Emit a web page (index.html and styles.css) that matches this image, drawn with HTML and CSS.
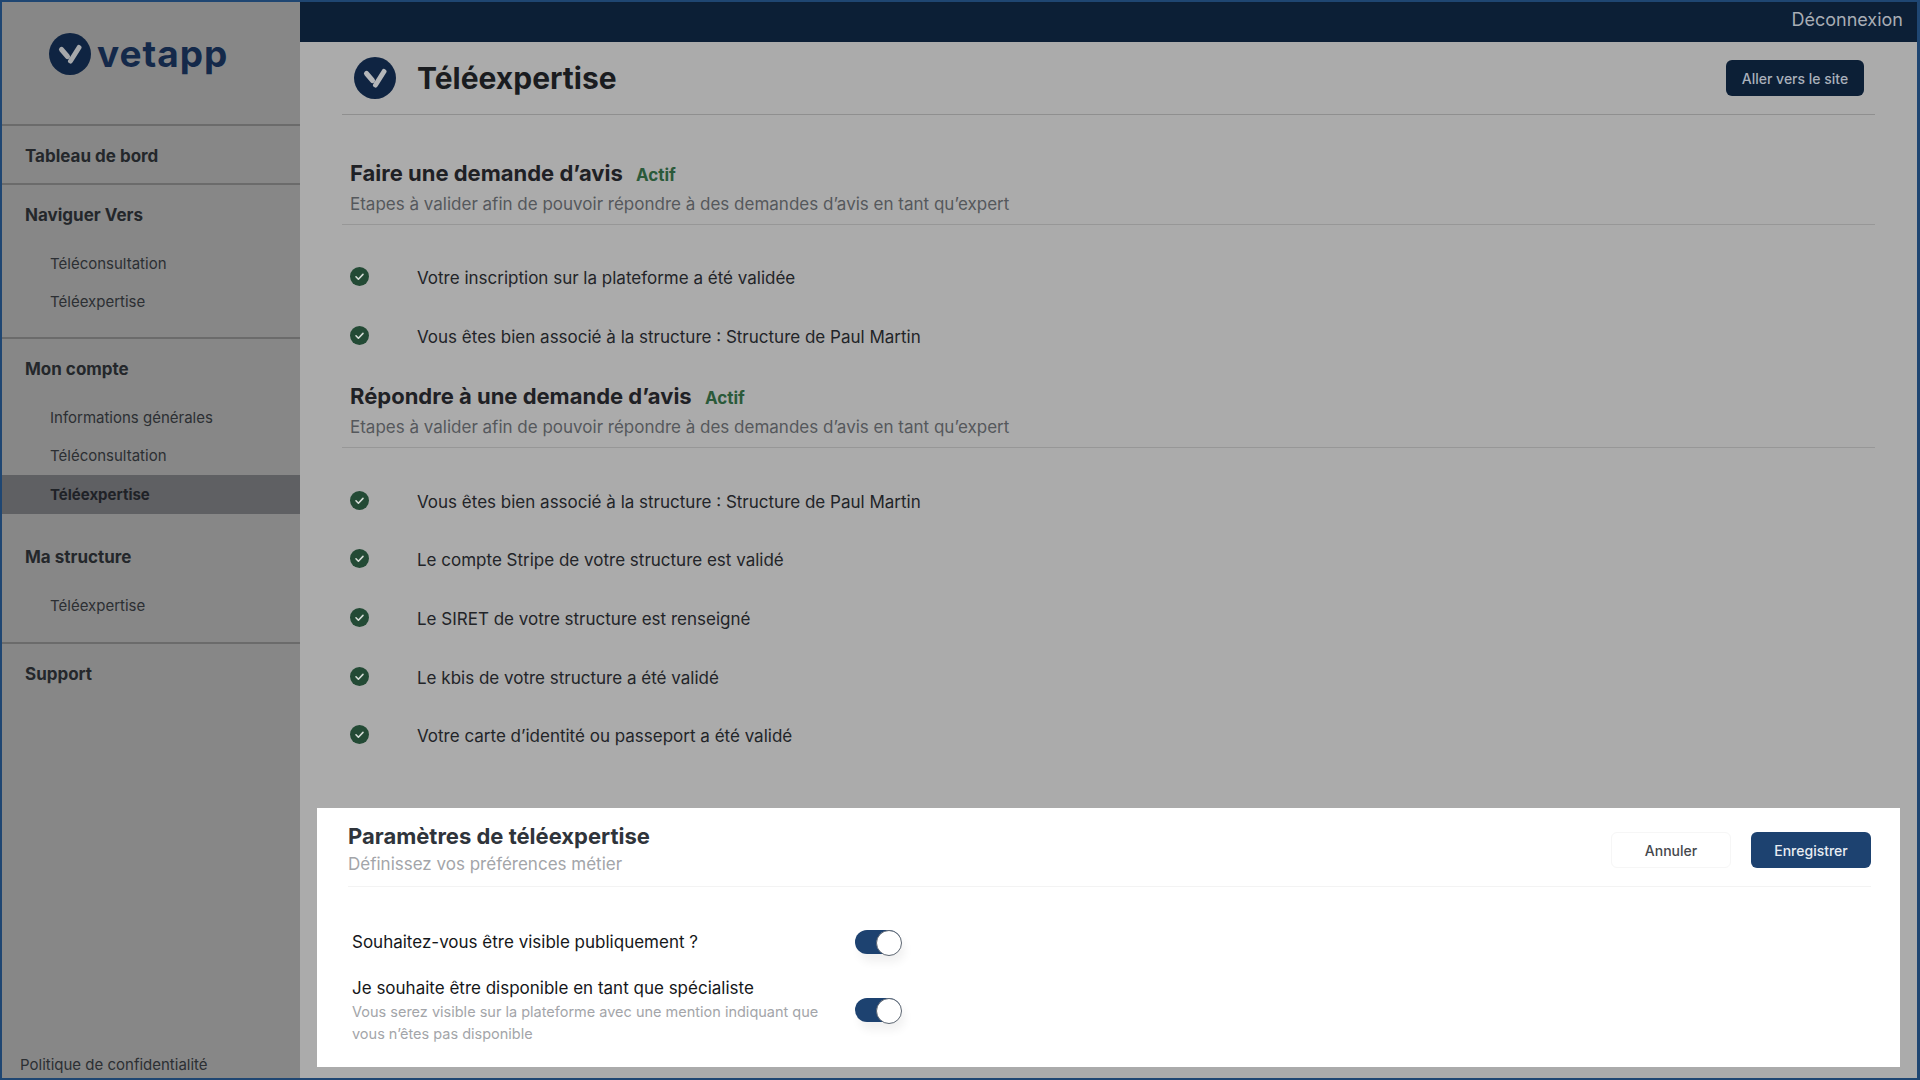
FILE: index.html
```html
<!DOCTYPE html>
<html lang="fr">
<head>
  <meta charset="UTF-8">
  <title>Téléexpertise</title>
  <link rel="stylesheet" href="styles.css">
</head>
<body>
  <svg class="defs" width="0" height="0">
    <symbol id="mark" viewBox="0 0 42 42">
      <circle cx="21" cy="21" r="21" fill="#0f2442"/>
      <path d="M12.5 16.5l6 7M30 14.5l-8.5 13.5" fill="none" stroke="currentColor" stroke-width="5" stroke-linecap="round"/>
    </symbol>
    <symbol id="check" viewBox="0 0 19 19">
      <circle cx="9.5" cy="9.5" r="9.5" fill="#234a35"/>
      <path d="M6 9.8l2.4 2.4 4.6-4.8" fill="none" stroke="#d5dcd7" stroke-width="1.6" stroke-linecap="round" stroke-linejoin="round"/>
    </symbol>
  </svg>

  <div class="app">
    <aside class="sidebar">
      <div class="logo">
        <svg class="logo-mark"><use href="#mark"/></svg>
        <span class="logo-text">vetapp</span>
      </div>
      <nav class="nav">
        <div class="nav-group nav-group-single">
          <div class="nav-title">Tableau de bord</div>
        </div>
        <div class="nav-group nav-group-browse">
          <div class="nav-title">Naviguer Vers</div>
          <a class="nav-link">Téléconsultation</a>
          <a class="nav-link">Téléexpertise</a>
        </div>
        <div class="nav-group nav-group-account">
          <div class="nav-title">Mon compte</div>
          <a class="nav-link">Informations générales</a>
          <a class="nav-link">Téléconsultation</a>
          <a class="nav-link active">Téléexpertise</a>
          <div class="nav-title nav-title-sub">Ma structure</div>
          <a class="nav-link">Téléexpertise</a>
        </div>
        <div class="nav-group nav-group-single">
          <div class="nav-title">Support</div>
        </div>
      </nav>
      <a class="privacy">Politique de confidentialité</a>
    </aside>

    <div class="main">
      <div class="topbar">Déconnexion</div>
      <div class="content">
        <header class="page-head">
          <svg class="page-mark"><use href="#mark"/></svg>
          <h1>Téléexpertise</h1>
          <a class="btn btn-dark">Aller vers le site</a>
        </header>

        <section class="steps steps-first">
          <div class="steps-head">
            <h2>Faire une demande d’avis <span class="status">Actif</span></h2>
            <p>Etapes à valider afin de pouvoir répondre à des demandes d’avis en tant qu’expert</p>
          </div>
          <ul>
            <li><svg class="check"><use href="#check"/></svg>Votre inscription sur la plateforme a été validée</li>
            <li><svg class="check"><use href="#check"/></svg>Vous êtes bien associé à la structure : Structure de Paul Martin</li>
          </ul>
        </section>

        <section class="steps">
          <div class="steps-head">
            <h2>Répondre à une demande d’avis <span class="status">Actif</span></h2>
            <p>Etapes à valider afin de pouvoir répondre à des demandes d’avis en tant qu’expert</p>
          </div>
          <ul>
            <li><svg class="check"><use href="#check"/></svg>Vous êtes bien associé à la structure : Structure de Paul Martin</li>
            <li><svg class="check"><use href="#check"/></svg>Le compte Stripe de votre structure est validé</li>
            <li><svg class="check"><use href="#check"/></svg>Le SIRET de votre structure est renseigné</li>
            <li><svg class="check"><use href="#check"/></svg>Le kbis de votre structure a été validé</li>
            <li><svg class="check"><use href="#check"/></svg>Votre carte d’identité ou passeport a été validé</li>
          </ul>
        </section>

        <section class="panel">
          <div class="panel-head">
            <div>
              <h3>Paramètres de téléexpertise</h3>
              <p>Définissez vos préférences métier</p>
            </div>
            <div class="panel-actions">
              <a class="btn btn-ghost">Annuler</a>
              <a class="btn btn-primary">Enregistrer</a>
            </div>
          </div>
          <div class="option option-first">
            <div class="option-text">
              <div class="option-label">Souhaitez-vous être visible publiquement ?</div>
            </div>
            <span class="toggle"></span>
          </div>
          <div class="option">
            <div class="option-text">
              <div class="option-label">Je souhaite être disponible en tant que spécialiste</div>
              <div class="option-help">Vous serez visible sur la plateforme avec une mention indiquant que vous n’êtes pas disponible</div>
            </div>
            <span class="toggle"></span>
          </div>
        </section>
      </div>
    </div>
  </div>
</body>
</html>
```

FILE: styles.css
```css
* {
  box-sizing: border-box;
}
html, body {
  margin: 0;
  height: 100%;
}
body {
  font-family: 'Inter', 'Open Sans', sans-serif;
  background-color: #1f4672;
  overflow: hidden;
}
.defs {
  display: block;
  height: 0;
}
h1, h2, h3, p, ul {
  margin: 0;
  padding: 0;
}
.app {
  display: flex;
  height: 1080px;
  padding: 2px 3px 2px 2px;
}

/* Sidebar */
.sidebar {
  width: 298px;
  flex: none;
  background-color: #878787;
  display: flex;
  flex-direction: column;
}
.logo {
  height: 124px;
  padding: 31px 0 0 47px;
  display: flex;
  align-items: flex-start;
  gap: 6px;
  border-bottom: 2px solid #6b6b6b;
  color: #a6a8ab;
}
.logo-mark {
  width: 42px;
  height: 42px;
}
.logo-text {
  font-size: 37px;
  font-weight: 700;
  line-height: 42px;
  color: #14294a;
  letter-spacing: 1px;
}
.nav {
  flex: 1;
}
.nav-group {
  border-bottom: 2px solid #6b6b6b;
}
.nav-group:last-child {
  border-bottom: 0;
}
.nav-group-single {
  height: 59px;
}
.nav-group-browse {
  height: 154px;
}
.nav-group-account {
  height: 305px;
}
.nav-title {
  height: 59px;
  padding-left: 23px;
  display: flex;
  align-items: center;
  font-size: 17px;
  font-weight: 700;
  color: #24272b;
}
.nav-title-sub {
  margin-top: 14px;
}
.nav-link {
  display: flex;
  align-items: center;
  height: 38.5px;
  padding-left: 48px;
  font-size: 15px;
  color: #2c2f33;
}
.nav-link.active {
  background-color: #5f6063;
  font-weight: 700;
  color: #1f2227;
}
.privacy {
  padding: 0 0 4px 18px;
  font-size: 15px;
  color: #2c2f33;
}

/* Main */
.main {
  flex: 1;
  display: flex;
  flex-direction: column;
  background-color: #ababab;
}
.topbar {
  height: 40px;
  flex: none;
  padding: 0 14px 5px 0;
  display: flex;
  align-items: center;
  justify-content: flex-end;
  background-color: #0c1f36;
  font-size: 18px;
  color: #a8adb5;
}
.content {
  flex: 1;
  position: relative;
  padding: 0 42px;
}
.page-head {
  height: 73px;
  display: flex;
  align-items: center;
  border-bottom: 1px solid #8f8f8f;
  padding: 0 11px 0 12px;
}
.page-mark {
  width: 42px;
  height: 42px;
  margin-right: 21px;
  color: #b4b6b9;
}
h1 {
  flex: 1;
  font-size: 30px;
  font-weight: 700;
  color: #1a1c20;
}
.btn {
  display: flex;
  align-items: center;
  justify-content: center;
  height: 36px;
  border-radius: 6px;
  font-size: 14px;
  font-weight: 500;
}
.btn-dark {
  width: 138px;
  background-color: #0c1f36;
  color: #a9b0bb;
}

/* Etapes */
.steps-first {
  margin-top: 39px;
}
.steps-head {
  height: 71px;
  padding: 0 8px;
  border-bottom: 1px solid #979797;
}
h2 {
  font-size: 22px;
  font-weight: 700;
  line-height: 38px;
  color: #1f2125;
}
.status {
  margin-left: 8px;
  font-size: 17px;
  font-weight: 700;
  color: #2b5a3a;
}
.steps-head p {
  font-size: 17px;
  line-height: 20px;
  color: #55585c;
}
.steps ul {
  list-style: none;
  padding: 24px 8px 0;
}
.steps li {
  display: flex;
  align-items: center;
  height: 58.7px;
  font-size: 17px;
  color: #222428;
}
.check {
  width: 19px;
  height: 19px;
  margin: -3px 48px 0 0;
  flex: none;
}
.steps + .steps {
  margin-top: 11px;
}

/* Panneau blanc */
.panel {
  position: absolute;
  left: 17px;
  right: 17px;
  top: 766px;
  height: 259px;
  padding: 0 29px 0 31px;
  background-color: #fff;
}
.panel-head {
  height: 79px;
  display: flex;
  justify-content: space-between;
  align-items: flex-start;
  padding-top: 12px;
  border-bottom: 1px solid #f3f3f3;
}
h3 {
  font-size: 22px;
  font-weight: 700;
  line-height: 32px;
  color: #2f343b;
}
.panel-head p {
  font-size: 17px;
  line-height: 24px;
  color: #a3a5a9;
}
.panel-actions {
  display: flex;
  gap: 20px;
  padding-top: 12px;
}
.btn-ghost {
  width: 120px;
  border: 1px solid #f6f6f6;
  color: #45484d;
}
.btn-primary {
  width: 120px;
  background-color: #1d4270;
  color: #e8edf3;
}
.option {
  display: flex;
  align-items: center;
  padding-left: 4px;
}
.option-first {
  height: 44px;
  margin-top: 33px;
  margin-bottom: 11px;
}
.option-text {
  width: 503px;
}
.option-label {
  font-size: 17px;
  line-height: 26px;
  color: #15171a;
}
.option-help {
  font-size: 14.5px;
  line-height: 21.5px;
  color: #a3a5a9;
}
.toggle {
  position: relative;
  width: 46px;
  height: 24px;
  border-radius: 12px;
  background-color: #1d4270;
  box-shadow: 4px 8px 10px rgba(0,0,0,0.06);
}
.toggle::after {
  content: "";
  position: absolute;
  right: -1px;
  top: 0;
  width: 24px;
  height: 24px;
  border-radius: 50%;
  background-color: #fff;
  border: 1px solid #5d6672;
}
```
